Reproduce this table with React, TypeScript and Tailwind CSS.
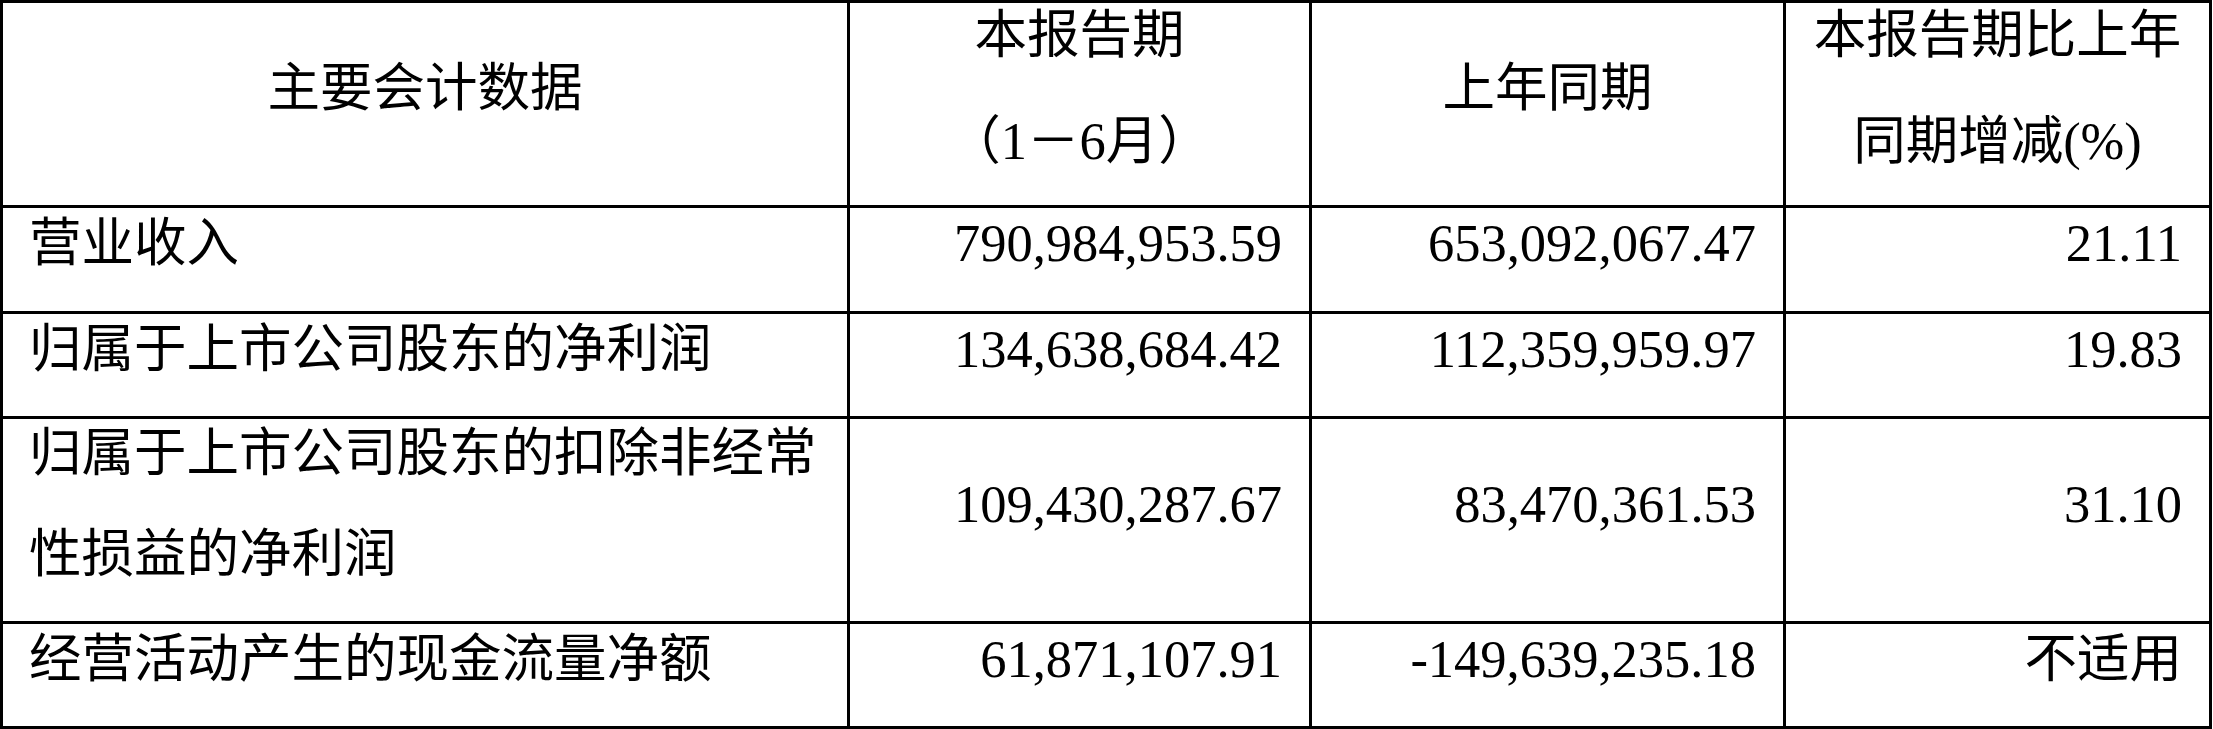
const header = [
  { lines: ['主要会计数据'] },
  { lines: ['本报告期', '（1－6月）'] },
  { lines: ['上年同期'] },
  { lines: ['本报告期比上年', '同期增减(%)'] },
];

const rows = [
  { label: ['营业收入'], cur: '790,984,953.59', prev: '653,092,067.47', chg: '21.11' },
  { label: ['归属于上市公司股东的净利润'], cur: '134,638,684.42', prev: '112,359,959.97', chg: '19.83' },
  {
    label: ['归属于上市公司股东的扣除非经常', '性损益的净利润'],
    cur: '109,430,287.67',
    prev: '83,470,361.53',
    chg: '31.10',
  },
  { label: ['经营活动产生的现金流量净额'], cur: '61,871,107.91', prev: '-149,639,235.18', chg: '不适用' },
];

const cell = 'border-l-[3px] border-t-[3px] border-black flex items-center pb-[32px]';

function Lines({ lines, gap }: { lines: string[]; gap: string }) {
  return (
    <div className={`flex flex-col ${gap}`}>
      {lines.map((l) => (
        <span key={l} className="block leading-[53px] whitespace-nowrap">
          {l}
        </span>
      ))}
    </div>
  );
}

export default function App() {
  return (
    <div className="min-h-screen bg-white text-black font-['Liberation_Serif','Noto_Sans_CJK_SC',serif] text-[52.5px]">
      <div className="grid w-[2212px] grid-cols-[847px_462px_474px_426px] grid-rows-[205px_106px_105px_205px_105px] border-r-[3px] border-b-[3px] border-black">
        {header.map((h, i) => (
          <div key={i} className={`${cell} justify-center text-center`}>
            <Lines lines={h.lines} gap="gap-[53px]" />
          </div>
        ))}

        {rows.map((r) => (
          <div key={r.cur} className="contents">
            <div className={`${cell} justify-start pl-[26px]`}>
              <Lines lines={r.label} gap="gap-[48px]" />
            </div>
            <div className={`${cell} justify-end pr-[27px]`}>
              <span className="leading-[53px]">{r.cur}</span>
            </div>
            <div className={`${cell} justify-end pr-[27px]`}>
              <span className="leading-[53px]">{r.prev}</span>
            </div>
            <div className={`${cell} justify-end pr-[27px]`}>
              <span className="leading-[53px]">{r.chg}</span>
            </div>
          </div>
        ))}
      </div>
    </div>
  );
}
